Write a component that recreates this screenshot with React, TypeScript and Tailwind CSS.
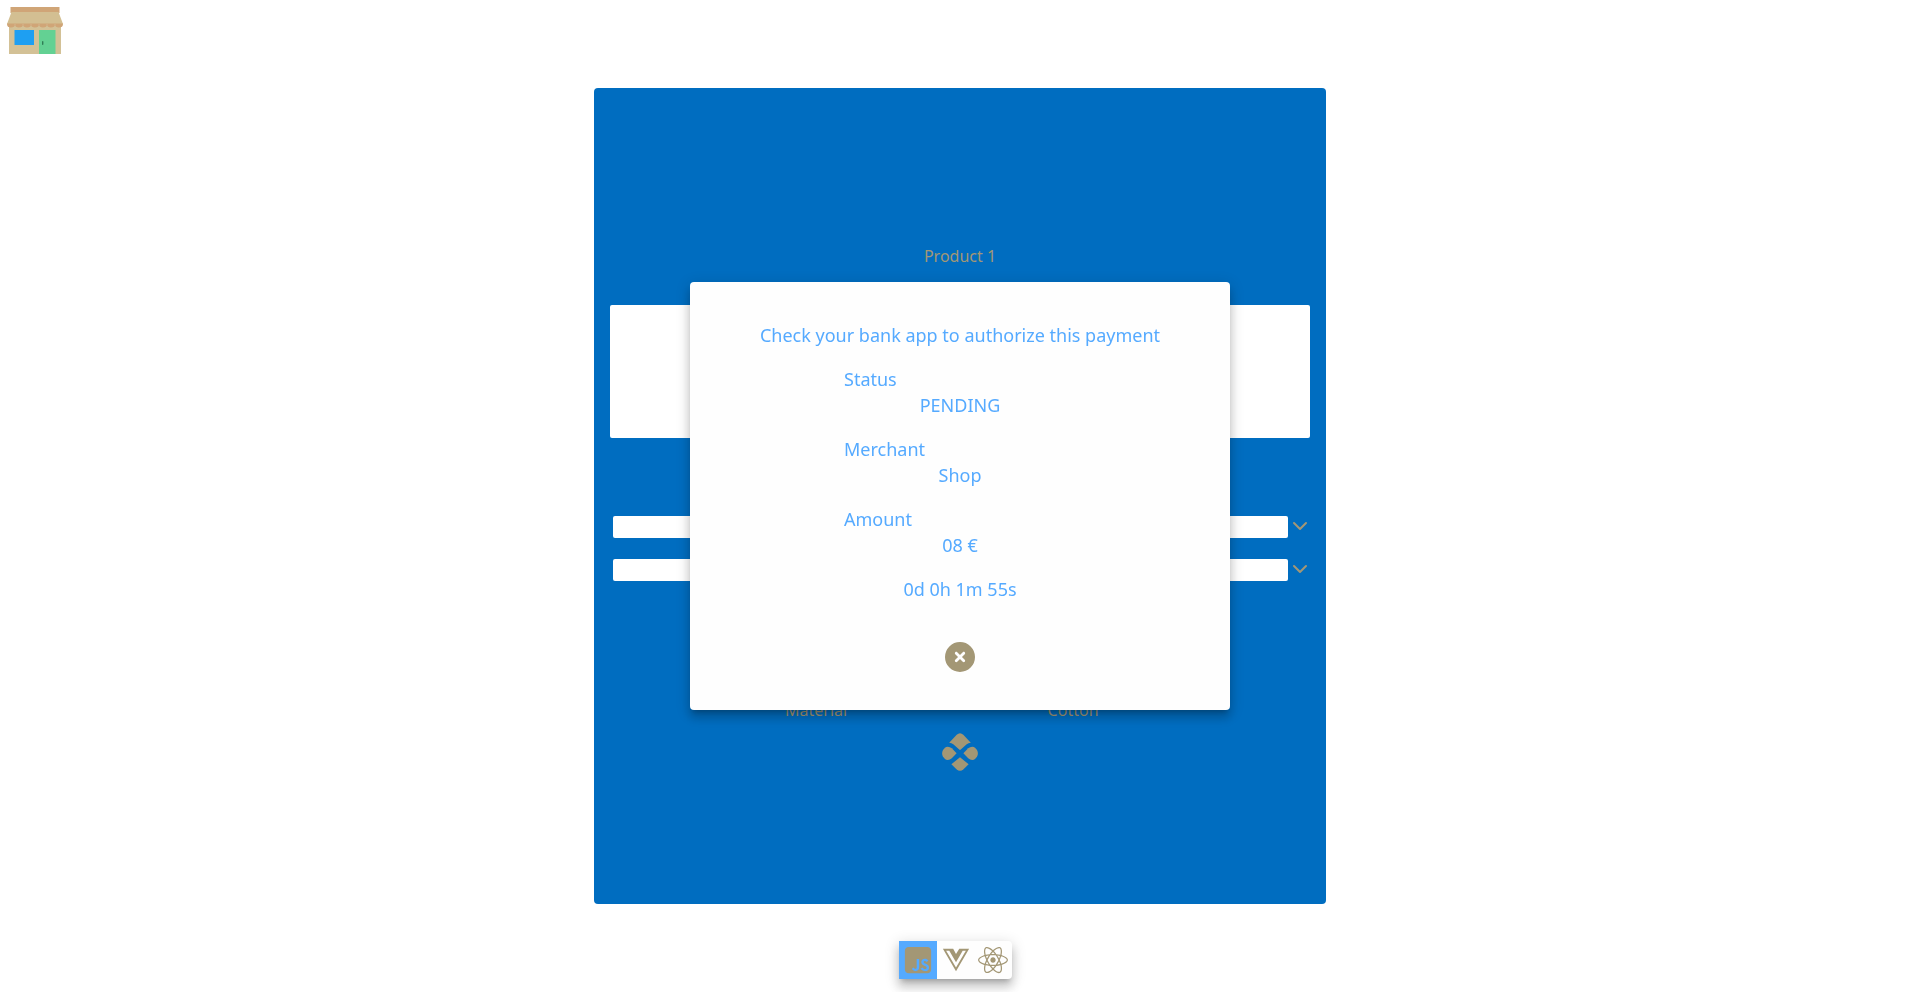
import { ChevronDown } from "lucide-react";
import { FaReact, FaSquareJs, FaVuejs, FaCircleXmark } from "react-icons/fa6";

function StoreLogo() {
  return (
    <svg viewBox="0 0 56 47" className="h-[47px] w-14" aria-hidden="true">
      <rect x="3.500" y="0" width="49" height="6" fill="#d0a577" />
      <rect x="2" y="18" width="52" height="29" fill="#d3c196" />
      <path d="M4.500 5H51.500L56 17H0Z" fill="#d3bf92" />
      <path
        d="M0 16.500H56V17a4 3.500 0 0 1-8 0a4 3.500 0 0 1-8 0a4 3.500 0 0 1-8 0a4 3.500 0 0 1-8 0a4 3.500 0 0 1-8 0a4 3.500 0 0 1-8 0a4 3.500 0 0 1-8 0Z"
        fill="#d0a577"
      />
      <rect x="7.500" y="23" width="19.500" height="15" fill="#1e9ff2" />
      <rect x="32" y="23" width="16.500" height="24" fill="#63d193" />
      <rect x="35" y="34" width="1.400" height="4" rx="0.700" fill="#2f7d55" />
    </svg>
  );
}

function PetalsIcon() {
  return (
    <svg viewBox="0 0 36 38" className="h-[38px] w-9" fill="currentColor" aria-hidden="true">
      <path d="M7.200 9.700L14.700 1.800Q18 -1.300 21.300 1.800L28.800 9.700Q26.300 9.700 24.700 11.200L18.800 16.600Q18 17.300 17.200 16.600L11.300 11.200Q9.700 9.700 7.200 9.700Z" />
      <path d="M18 24.200L26.600 31.200L21.500 36.200Q18 39.400 14.500 36.200L9.400 31.200Z" />
      <path d="M14.600 20.300L9.800 25.300Q8 27 5.700 27Q4 27 3 26L1 23.700Q-0.800 20.300 1 17L3 14.700Q4 13.700 5.700 13.700Q8 13.700 9.800 15.300Z" />
      <path d="M21.400 20.300L26.200 25.300Q28 27 30.300 27Q32 27 33 26L35 23.700Q36.800 20.300 35 17L33 14.700Q32 13.700 30.300 13.700Q28 13.700 26.200 15.300Z" />
    </svg>
  );
}

function OptionField({ label }: { label: string }) {
  return (
    <div className="flex items-center">
      <input
        aria-label={label}
        className="h-[22px] min-w-0 flex-1 rounded-xs bg-white px-2 text-base text-[#a39775] outline-none"
      />
      <button type="button" aria-label={`Show ${label} choices`} className="-my-1 -mr-0.5 pb-0.5">
        <ChevronDown size={24} />
      </button>
    </div>
  );
}

const details = [
  { term: "Status", value: "PENDING" },
  { term: "Merchant", value: "Shop" },
  { term: "Amount", value: "08 €" },
];

function PaymentDialog() {
  return (
    <div className="fixed inset-0 z-10 flex items-center justify-center">
      <section
        role="dialog"
        aria-modal="true"
        aria-labelledby="payment-title"
        className="flex w-full max-w-[540px] flex-col items-center gap-[18px] rounded bg-[#fefefe] pt-10 pb-[38px] text-lg/[26px] text-[#55aaff] shadow-[0_5px_5px_-3px_rgba(0,0,0,0.2),0_8px_10px_1px_rgba(0,0,0,0.14),0_3px_14px_2px_rgba(0,0,0,0.12)]"
      >
        <h2 id="payment-title">Check your bank app to authorize this payment</h2>
        <dl className="flex w-[232px] flex-col gap-[18px]">
          {details.map(({ term, value }) => (
            <div key={term}>
              <dt>{term}</dt>
              <dd className="text-center">{value}</dd>
            </div>
          ))}
        </dl>
        <p>0d 0h 1m 55s</p>
        <button type="button" aria-label="Cancel payment" className="mt-[22px] text-[#a39775]">
          <FaCircleXmark size={30} />
        </button>
      </section>
    </div>
  );
}

export default function App() {
  return (
    <div className="flex min-h-screen flex-col bg-white font-['Noto_Sans',sans-serif] text-[#a39775]">
      <header className="h-[88px] px-[7px] pt-[7px]">
        <a href="#" aria-label="Shop" className="inline-block">
          <StoreLogo />
        </a>
      </header>

      <main className="mx-auto flex w-full max-w-[732px] flex-1 flex-col rounded bg-[#006dc0] px-4 pt-[156px] text-base/6">
        <h1 className="text-center">Product 1</h1>
        <textarea
          aria-label="Product description"
          readOnly
          className="mt-[37px] h-[133px] w-full resize-none rounded-xs bg-white outline-none"
        />
        <div className="mt-[78px] flex flex-col gap-[21px] pl-[3px]">
          <OptionField label="colour" />
          <OptionField label="size" />
        </div>
        <table className="mx-auto mt-[117px] w-full max-w-[514px] table-fixed text-center">
          <tbody>
            <tr>
              <th scope="row" className="w-[44%] font-normal">
                Material
              </th>
              <td>Cotton</td>
            </tr>
          </tbody>
        </table>
        <button type="button" aria-label="Pay" className="mx-auto mt-[11px]">
          <PetalsIcon />
        </button>
      </main>

      <footer className="flex h-[88px] justify-center pt-[37px] pr-[9px]">
        <nav
          aria-label="Framework"
          className="flex h-[38px] rounded-r bg-[#fefefe] shadow-[0_5px_5px_-3px_rgba(0,0,0,0.2),0_8px_10px_1px_rgba(0,0,0,0.14),0_3px_14px_2px_rgba(0,0,0,0.12)]"
        >
          <button type="button" aria-label="JavaScript" className="grid w-[38px] place-items-center bg-[#55aaff]">
            <FaSquareJs size={30} />
          </button>
          <button type="button" aria-label="Vue" className="grid w-[37px] place-items-center">
            <FaVuejs size={30} />
          </button>
          <button type="button" aria-label="React" className="grid w-[38px] place-items-center">
            <FaReact size={30} />
          </button>
        </nav>
      </footer>

      <PaymentDialog />
    </div>
  );
}
